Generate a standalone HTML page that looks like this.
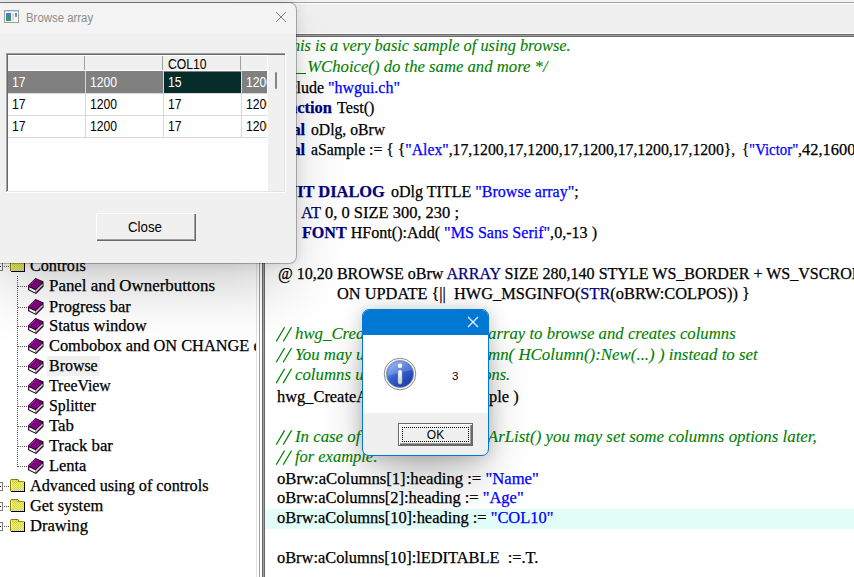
<!DOCTYPE html>
<html><head><meta charset="utf-8">
<style>
*{margin:0;padding:0;box-sizing:border-box}
html,body{width:854px;height:577px;overflow:hidden;background:#f0f0f0}
body{position:relative;font-family:"Liberation Sans",sans-serif}
.abs{position:absolute}
.hl{position:absolute;left:0;width:854px;height:1px}
.clip{position:absolute;overflow:hidden}
.inner{position:absolute;left:0;top:0;width:854px;height:577px}
.ln{position:absolute;white-space:pre;font-family:"Liberation Serif",serif;font-size:16px;line-height:20px;color:#000;transform-origin:0 0;-webkit-text-stroke:0.25px currentColor}
.c{color:#008000;font-style:italic;-webkit-text-stroke:0.1px currentColor}
.s{color:#0000ff}
.k{color:#000080;font-weight:bold}
.n{color:#000080}
.t{color:transparent!important;-webkit-text-stroke:0!important}
.cell{position:absolute;font-family:"Liberation Sans",sans-serif;font-size:14px;line-height:14px;white-space:pre;color:#000;transform:scaleX(0.87);transform-origin:0 0}
</style></head><body>
<!-- top strip -->
<div class="hl" style="top:0;background:#f2f2f2"></div>
<div class="hl" style="top:1px;background:#f8f8f8"></div>
<div class="hl" style="top:2px;background:#a0a0a0"></div>
<div class="hl" style="top:3px;background:#fff"></div>
<div class="hl" style="top:33px;background:#fff"></div>
<div class="hl" style="top:34px;background:#696969"></div>
<div class="hl" style="top:35px;background:#a0a0a0"></div>
<div class="hl" style="top:36px;background:#696969"></div>

<!-- tree -->
<div class="clip" style="left:0;top:37px;width:256px;height:540px;background:#fff">
 <div class="inner" style="top:-37px">
  <div class="abs" style="left:47px;top:356px;width:53px;height:20px;background:#f0f0f0"></div>
<svg class="abs" style="left:0;top:0" width="256" height="577"><defs><pattern id="dith" x="0" y="0" width="2" height="2" patternUnits="userSpaceOnUse"><rect width="2" height="2" fill="#ffff00"/><rect x="1" y="0" width="1" height="1" fill="#c8c8b0"/><rect x="0" y="1" width="1" height="1" fill="#c8c8b0"/></pattern></defs><g transform="translate(10,259)"><path d="M0 2 L1 0 H8 L9.5 2 H14 V12 H0 Z" fill="#808000"/><rect x="1" y="2.8" width="13" height="9.2" fill="url(#dith)"/><rect x="1.2" y="1" width="6.6" height="1.8" fill="url(#dith)"/><rect x="1" y="1.8" width="1" height="8" fill="#f6f6c0"/><rect x="14" y="2.8" width="1" height="10.2" fill="#000"/><rect x="1" y="12" width="14" height="1" fill="#000"/></g><line x1="4" y1="266.5" x2="10" y2="266.5" stroke="#555" stroke-width="1" stroke-dasharray="1 1"/><rect x="-5.5" y="262.5" width="8" height="8" fill="#fff" stroke="#808080"/><line x1="-4" y1="266.5" x2="1" y2="266.5" stroke="#000"/><g transform="translate(28,278)"><polygon points="0,7.5 7.5,0 15.5,3.5 15.5,8.5 8,16 0,12" fill="#000"/><polygon points="0.6,7.4 7.5,0.6 14.6,4 14.3,4.8 7.4,11.2 1.2,8.3" fill="#800080"/><polygon points="1.1,9.2 7.5,12.3 7.5,14.7 1.1,11.5" fill="#fff"/><polygon points="7.5,12.3 14.6,5.4 14.6,7.5 7.5,14.7" fill="#d4d4d4"/><polygon points="7.8,14.8 14.9,7.9 15,8.7 8,15.5" fill="#800080"/><polygon points="0.4,7.6 1.2,7.9 1.2,11.4 0.4,11.1" fill="#800080"/><line x1="1.6" y1="7.2" x2="7.2" y2="1.6" stroke="#c8a0c8" stroke-width="0.8" stroke-dasharray="0.7 0.7"/></g><line x1="18" y1="286.5" x2="28" y2="286.5" stroke="#555" stroke-width="1" stroke-dasharray="1 1"/><g transform="translate(28,299)"><polygon points="0,7.5 7.5,0 15.5,3.5 15.5,8.5 8,16 0,12" fill="#000"/><polygon points="0.6,7.4 7.5,0.6 14.6,4 14.3,4.8 7.4,11.2 1.2,8.3" fill="#800080"/><polygon points="1.1,9.2 7.5,12.3 7.5,14.7 1.1,11.5" fill="#fff"/><polygon points="7.5,12.3 14.6,5.4 14.6,7.5 7.5,14.7" fill="#d4d4d4"/><polygon points="7.8,14.8 14.9,7.9 15,8.7 8,15.5" fill="#800080"/><polygon points="0.4,7.6 1.2,7.9 1.2,11.4 0.4,11.1" fill="#800080"/><line x1="1.6" y1="7.2" x2="7.2" y2="1.6" stroke="#c8a0c8" stroke-width="0.8" stroke-dasharray="0.7 0.7"/></g><line x1="18" y1="307.5" x2="28" y2="307.5" stroke="#555" stroke-width="1" stroke-dasharray="1 1"/><g transform="translate(28,318)"><polygon points="0,7.5 7.5,0 15.5,3.5 15.5,8.5 8,16 0,12" fill="#000"/><polygon points="0.6,7.4 7.5,0.6 14.6,4 14.3,4.8 7.4,11.2 1.2,8.3" fill="#800080"/><polygon points="1.1,9.2 7.5,12.3 7.5,14.7 1.1,11.5" fill="#fff"/><polygon points="7.5,12.3 14.6,5.4 14.6,7.5 7.5,14.7" fill="#d4d4d4"/><polygon points="7.8,14.8 14.9,7.9 15,8.7 8,15.5" fill="#800080"/><polygon points="0.4,7.6 1.2,7.9 1.2,11.4 0.4,11.1" fill="#800080"/><line x1="1.6" y1="7.2" x2="7.2" y2="1.6" stroke="#c8a0c8" stroke-width="0.8" stroke-dasharray="0.7 0.7"/></g><line x1="18" y1="326.5" x2="28" y2="326.5" stroke="#555" stroke-width="1" stroke-dasharray="1 1"/><g transform="translate(28,338)"><polygon points="0,7.5 7.5,0 15.5,3.5 15.5,8.5 8,16 0,12" fill="#000"/><polygon points="0.6,7.4 7.5,0.6 14.6,4 14.3,4.8 7.4,11.2 1.2,8.3" fill="#800080"/><polygon points="1.1,9.2 7.5,12.3 7.5,14.7 1.1,11.5" fill="#fff"/><polygon points="7.5,12.3 14.6,5.4 14.6,7.5 7.5,14.7" fill="#d4d4d4"/><polygon points="7.8,14.8 14.9,7.9 15,8.7 8,15.5" fill="#800080"/><polygon points="0.4,7.6 1.2,7.9 1.2,11.4 0.4,11.1" fill="#800080"/><line x1="1.6" y1="7.2" x2="7.2" y2="1.6" stroke="#c8a0c8" stroke-width="0.8" stroke-dasharray="0.7 0.7"/></g><line x1="18" y1="346.5" x2="28" y2="346.5" stroke="#555" stroke-width="1" stroke-dasharray="1 1"/><g transform="translate(28,358)"><polygon points="0,7.5 7.5,0 15.5,3.5 15.5,8.5 8,16 0,12" fill="#000"/><polygon points="0.6,7.4 7.5,0.6 14.6,4 14.3,4.8 7.4,11.2 1.2,8.3" fill="#800080"/><polygon points="1.1,9.2 7.5,12.3 7.5,14.7 1.1,11.5" fill="#fff"/><polygon points="7.5,12.3 14.6,5.4 14.6,7.5 7.5,14.7" fill="#d4d4d4"/><polygon points="7.8,14.8 14.9,7.9 15,8.7 8,15.5" fill="#800080"/><polygon points="0.4,7.6 1.2,7.9 1.2,11.4 0.4,11.1" fill="#800080"/><line x1="1.6" y1="7.2" x2="7.2" y2="1.6" stroke="#c8a0c8" stroke-width="0.8" stroke-dasharray="0.7 0.7"/></g><line x1="18" y1="366.5" x2="28" y2="366.5" stroke="#555" stroke-width="1" stroke-dasharray="1 1"/><g transform="translate(28,378)"><polygon points="0,7.5 7.5,0 15.5,3.5 15.5,8.5 8,16 0,12" fill="#000"/><polygon points="0.6,7.4 7.5,0.6 14.6,4 14.3,4.8 7.4,11.2 1.2,8.3" fill="#800080"/><polygon points="1.1,9.2 7.5,12.3 7.5,14.7 1.1,11.5" fill="#fff"/><polygon points="7.5,12.3 14.6,5.4 14.6,7.5 7.5,14.7" fill="#d4d4d4"/><polygon points="7.8,14.8 14.9,7.9 15,8.7 8,15.5" fill="#800080"/><polygon points="0.4,7.6 1.2,7.9 1.2,11.4 0.4,11.1" fill="#800080"/><line x1="1.6" y1="7.2" x2="7.2" y2="1.6" stroke="#c8a0c8" stroke-width="0.8" stroke-dasharray="0.7 0.7"/></g><line x1="18" y1="386.5" x2="28" y2="386.5" stroke="#555" stroke-width="1" stroke-dasharray="1 1"/><g transform="translate(28,398)"><polygon points="0,7.5 7.5,0 15.5,3.5 15.5,8.5 8,16 0,12" fill="#000"/><polygon points="0.6,7.4 7.5,0.6 14.6,4 14.3,4.8 7.4,11.2 1.2,8.3" fill="#800080"/><polygon points="1.1,9.2 7.5,12.3 7.5,14.7 1.1,11.5" fill="#fff"/><polygon points="7.5,12.3 14.6,5.4 14.6,7.5 7.5,14.7" fill="#d4d4d4"/><polygon points="7.8,14.8 14.9,7.9 15,8.7 8,15.5" fill="#800080"/><polygon points="0.4,7.6 1.2,7.9 1.2,11.4 0.4,11.1" fill="#800080"/><line x1="1.6" y1="7.2" x2="7.2" y2="1.6" stroke="#c8a0c8" stroke-width="0.8" stroke-dasharray="0.7 0.7"/></g><line x1="18" y1="406.5" x2="28" y2="406.5" stroke="#555" stroke-width="1" stroke-dasharray="1 1"/><g transform="translate(28,418)"><polygon points="0,7.5 7.5,0 15.5,3.5 15.5,8.5 8,16 0,12" fill="#000"/><polygon points="0.6,7.4 7.5,0.6 14.6,4 14.3,4.8 7.4,11.2 1.2,8.3" fill="#800080"/><polygon points="1.1,9.2 7.5,12.3 7.5,14.7 1.1,11.5" fill="#fff"/><polygon points="7.5,12.3 14.6,5.4 14.6,7.5 7.5,14.7" fill="#d4d4d4"/><polygon points="7.8,14.8 14.9,7.9 15,8.7 8,15.5" fill="#800080"/><polygon points="0.4,7.6 1.2,7.9 1.2,11.4 0.4,11.1" fill="#800080"/><line x1="1.6" y1="7.2" x2="7.2" y2="1.6" stroke="#c8a0c8" stroke-width="0.8" stroke-dasharray="0.7 0.7"/></g><line x1="18" y1="426.5" x2="28" y2="426.5" stroke="#555" stroke-width="1" stroke-dasharray="1 1"/><g transform="translate(28,438)"><polygon points="0,7.5 7.5,0 15.5,3.5 15.5,8.5 8,16 0,12" fill="#000"/><polygon points="0.6,7.4 7.5,0.6 14.6,4 14.3,4.8 7.4,11.2 1.2,8.3" fill="#800080"/><polygon points="1.1,9.2 7.5,12.3 7.5,14.7 1.1,11.5" fill="#fff"/><polygon points="7.5,12.3 14.6,5.4 14.6,7.5 7.5,14.7" fill="#d4d4d4"/><polygon points="7.8,14.8 14.9,7.9 15,8.7 8,15.5" fill="#800080"/><polygon points="0.4,7.6 1.2,7.9 1.2,11.4 0.4,11.1" fill="#800080"/><line x1="1.6" y1="7.2" x2="7.2" y2="1.6" stroke="#c8a0c8" stroke-width="0.8" stroke-dasharray="0.7 0.7"/></g><line x1="18" y1="446.5" x2="28" y2="446.5" stroke="#555" stroke-width="1" stroke-dasharray="1 1"/><g transform="translate(28,458)"><polygon points="0,7.5 7.5,0 15.5,3.5 15.5,8.5 8,16 0,12" fill="#000"/><polygon points="0.6,7.4 7.5,0.6 14.6,4 14.3,4.8 7.4,11.2 1.2,8.3" fill="#800080"/><polygon points="1.1,9.2 7.5,12.3 7.5,14.7 1.1,11.5" fill="#fff"/><polygon points="7.5,12.3 14.6,5.4 14.6,7.5 7.5,14.7" fill="#d4d4d4"/><polygon points="7.8,14.8 14.9,7.9 15,8.7 8,15.5" fill="#800080"/><polygon points="0.4,7.6 1.2,7.9 1.2,11.4 0.4,11.1" fill="#800080"/><line x1="1.6" y1="7.2" x2="7.2" y2="1.6" stroke="#c8a0c8" stroke-width="0.8" stroke-dasharray="0.7 0.7"/></g><line x1="18" y1="466.5" x2="28" y2="466.5" stroke="#555" stroke-width="1" stroke-dasharray="1 1"/><g transform="translate(10,479)"><path d="M0 2 L1 0 H8 L9.5 2 H14 V12 H0 Z" fill="#808000"/><rect x="1" y="2.8" width="13" height="9.2" fill="url(#dith)"/><rect x="1.2" y="1" width="6.6" height="1.8" fill="url(#dith)"/><rect x="1" y="1.8" width="1" height="8" fill="#f6f6c0"/><rect x="14" y="2.8" width="1" height="10.2" fill="#000"/><rect x="1" y="12" width="14" height="1" fill="#000"/></g><line x1="4" y1="486.5" x2="10" y2="486.5" stroke="#555" stroke-width="1" stroke-dasharray="1 1"/><rect x="-5.5" y="482.5" width="8" height="8" fill="#fff" stroke="#808080"/><line x1="-4" y1="486.5" x2="1" y2="486.5" stroke="#000"/><g transform="translate(10,499)"><path d="M0 2 L1 0 H8 L9.5 2 H14 V12 H0 Z" fill="#808000"/><rect x="1" y="2.8" width="13" height="9.2" fill="url(#dith)"/><rect x="1.2" y="1" width="6.6" height="1.8" fill="url(#dith)"/><rect x="1" y="1.8" width="1" height="8" fill="#f6f6c0"/><rect x="14" y="2.8" width="1" height="10.2" fill="#000"/><rect x="1" y="12" width="14" height="1" fill="#000"/></g><line x1="4" y1="506.5" x2="10" y2="506.5" stroke="#555" stroke-width="1" stroke-dasharray="1 1"/><rect x="-5.5" y="502.5" width="8" height="8" fill="#fff" stroke="#808080"/><line x1="-4" y1="506.5" x2="1" y2="506.5" stroke="#000"/><g transform="translate(10,519)"><path d="M0 2 L1 0 H8 L9.5 2 H14 V12 H0 Z" fill="#808000"/><rect x="1" y="2.8" width="13" height="9.2" fill="url(#dith)"/><rect x="1.2" y="1" width="6.6" height="1.8" fill="url(#dith)"/><rect x="1" y="1.8" width="1" height="8" fill="#f6f6c0"/><rect x="14" y="2.8" width="1" height="10.2" fill="#000"/><rect x="1" y="12" width="14" height="1" fill="#000"/></g><line x1="4" y1="526.5" x2="10" y2="526.5" stroke="#555" stroke-width="1" stroke-dasharray="1 1"/><rect x="-5.5" y="522.5" width="8" height="8" fill="#fff" stroke="#808080"/><line x1="-4" y1="526.5" x2="1" y2="526.5" stroke="#000"/><line x1="17.5" y1="276" x2="17.5" y2="467" stroke="#555" stroke-width="1" stroke-dasharray="1 1"/></svg>
<div class="ln" style="left:29.5px;top:256.3px;transform:scaleX(1.0104)">Controls</div>
<div class="ln" style="left:48.5px;top:275.7px;transform:scaleX(1.0552)">Panel and Ownerbuttons</div>
<div class="ln" style="left:48.5px;top:296.6px;transform:scaleX(1.0283)">Progress bar</div>
<div class="ln" style="left:48.5px;top:316.1px;transform:scaleX(1.0320)">Status window</div>
<div class="ln" style="left:48.5px;top:336.3px;transform:scaleX(1.0223)">Combobox and ON CHANGE event</div>
<div class="ln" style="left:48.5px;top:355.9px;transform:scaleX(0.9961)">Browse</div>
<div class="ln" style="left:48.5px;top:376.0px;transform:scaleX(0.9898)">TreeView</div>
<div class="ln" style="left:48.5px;top:396.3px;transform:scaleX(0.9913)">Splitter</div>
<div class="ln" style="left:48.5px;top:416.2px;transform:scaleX(1.0477)">Tab</div>
<div class="ln" style="left:48.5px;top:436.1px;transform:scaleX(1.0446)">Track bar</div>
<div class="ln" style="left:48.5px;top:456.4px;transform:scaleX(1.0269)">Lenta</div>
<div class="ln" style="left:29.5px;top:476.1px;transform:scaleX(1.0119)">Advanced using of controls</div>
<div class="ln" style="left:29.5px;top:496.1px;transform:scaleX(1.0217)">Get system</div>
<div class="ln" style="left:29.5px;top:515.9px;transform:scaleX(1.0342)">Drawing</div>
 </div>
</div>
<div class="abs" style="left:256px;top:37px;width:9px;height:540px;background:#fff"></div>
<div class="abs" style="left:256px;top:37px;width:1px;height:540px;background:#e3e3e3"></div>
<div class="abs" style="left:259px;top:37px;width:1px;height:540px;background:#a0a0a0"></div>
<div class="abs" style="left:262px;top:37px;width:1px;height:540px;background:#696969"></div>
<div class="abs" style="left:263px;top:37px;width:1px;height:540px;background:#a0a0a0"></div>
<div class="abs" style="left:264px;top:37px;width:1px;height:540px;background:#696969"></div>

<!-- editor -->
<div class="clip" style="left:265px;top:37px;width:589px;height:540px;background:#fff">
 <div class="inner" style="left:-265px;top:-37px">
  <div class="abs" style="left:265px;top:509px;width:589px;height:20px;background:#e2fcf8"></div>
<div class="ln" style="left:266.2px;top:36.4px;transform:scaleX(1.0221)"><span class="c">/* This is a very basic sample of using browse.</span></div>
<div class="ln" style="left:271.3px;top:56.9px;transform:scaleX(1.0431)"><span class="c t">hwg_</span><span class="c">WChoice() do the same and more */</span></div>
<div class="ln" style="left:268.5px;top:78.0px;transform:scaleX(0.9976)">#include <span class="s">&quot;hwgui.ch&quot;</span></div>
<div class="ln" style="left:268.7px;top:98.1px;transform:scaleX(1.0250)"><span class="k">Function</span></div>
<div class="ln" style="left:337.1px;top:98.1px;transform:scaleX(1.0083)">Test()</div>
<div class="ln" style="left:266.4px;top:119.5px;transform:scaleX(1.0250)"><span class="k">Local</span></div>
<div class="ln" style="left:310.5px;top:119.5px;transform:scaleX(0.9793)">oDlg, oBrw</div>
<div class="ln" style="left:266.4px;top:140.4px;transform:scaleX(1.0250)"><span class="k">Local</span></div>
<div class="ln" style="left:310.8px;top:140.4px;transform:scaleX(0.9827)">aSample := { {<span class="s">&quot;Alex&quot;</span>,17,1200,17,1200,17,1200,17,1200,17,1200},</div>
<div class="ln" style="left:741.9px;top:140.4px;transform:scaleX(0.9263)">{<span class="s">&quot;Victor&quot;</span></div>
<div class="ln" style="left:798.1px;top:140.4px;transform:scaleX(1.0250)">,42,1600,17,1200,17,1200}</div>
<div class="ln" style="left:279.0px;top:181.8px;transform:scaleX(1.0250)"><span class="k">INIT DIALOG</span></div>
<div class="ln" style="left:390.9px;top:181.8px;transform:scaleX(1.0016)">oDlg TITLE <span class="s">&quot;Browse array&quot;</span>;</div>
<div class="ln" style="left:300.5px;top:202.7px;transform:scaleX(1.0294)"><span class="n">AT</span> 0, 0 SIZE 300, 230 ;</div>
<div class="ln" style="left:301.5px;top:222.7px;transform:scaleX(1.0051)"><span class="k">FONT</span> HFont():Add( <span class="s">&quot;MS Sans Serif&quot;</span>,0,-13 )</div>
<div class="ln" style="left:277.5px;top:263.8px;transform:scaleX(1.0026)">@ 10,20 BROWSE oBrw <span class="n">ARRAY</span> SIZE 280,140 STYLE WS_BORDER + WS_VSCROLL</div>
<div class="ln" style="left:336.5px;top:283.6px;transform:scaleX(1.0221)">ON UPDATE {||  HWG_MSGINFO(<span class="n">STR</span>(oBRW:COLPOS)) }</div>
<svg class="abs" style="left:0;top:0" width="300" height="577"><path d="M276.2 341.5L284.6 327.2M283.2 341.5L291.6 327.2" stroke="#008000" stroke-width="1.25" fill="none"/></svg>
<div class="clip" style="left:0;top:0;width:362px;height:577px"><div class="inner"><div class="ln" style="left:295.3px;top:323.8px;transform:scaleX(1.0500)"><span class="c">hwg_CreateArList creates array to browse</span></div></div></div>
<div class="ln" style="left:390.0px;top:323.8px;transform:scaleX(1.0470)"><span class="c">ArList creates array to browse and creates columns</span></div>
<svg class="abs" style="left:0;top:0" width="300" height="577"><path d="M276.2 362.3L284.6 348.0M283.2 362.3L291.6 348.0" stroke="#008000" stroke-width="1.25" fill="none"/></svg>
<div class="clip" style="left:0;top:0;width:362px;height:577px"><div class="inner"><div class="ln" style="left:295.3px;top:344.6px;transform:scaleX(1.0500)"><span class="c">You may use oBrw:AddColumn( HColumn</span></div></div></div>
<div class="ln" style="left:428.0px;top:344.6px;transform:scaleX(1.0540)"><span class="c">AddColumn( HColumn():New(...) ) instead to set</span></div>
<svg class="abs" style="left:0;top:0" width="300" height="577"><path d="M276.2 383.1L284.6 368.8M283.2 383.1L291.6 368.8" stroke="#008000" stroke-width="1.25" fill="none"/></svg>
<div class="clip" style="left:0;top:0;width:362px;height:577px"><div class="inner"><div class="ln" style="left:295.3px;top:365.4px;transform:scaleX(1.0500)"><span class="c">columns using other options.</span></div></div></div>
<div class="ln" style="left:419.4px;top:365.4px;transform:scaleX(1.0250)"><span class="c">other options.</span></div>
<div class="clip" style="left:0;top:0;width:362px;height:577px"><div class="inner"><div class="ln" style="left:276.5px;top:386.7px;transform:scaleX(1.0250)">hwg_CreateArList( oBrw, aSample )</div></div></div>
<div class="ln" style="left:408.8px;top:386.7px;transform:scaleX(1.0250)">oBrw, aSample )</div>
<svg class="abs" style="left:0;top:0" width="300" height="577"><path d="M276.2 444.7L284.6 430.4M283.2 444.7L291.6 430.4" stroke="#008000" stroke-width="1.25" fill="none"/></svg>
<div class="clip" style="left:0;top:0;width:362px;height:577px"><div class="inner"><div class="ln" style="left:294.6px;top:427.0px;transform:scaleX(1.0500)"><span class="c">In case of hwg_CreateArList() you may</span></div></div></div>
<div class="ln" style="left:406.2px;top:427.0px;transform:scaleX(1.0542)"><span class="c">hwg_CreateArList() you may set some columns options later,</span></div>
<svg class="abs" style="left:0;top:0" width="300" height="577"><path d="M276.2 464.8L284.6 450.5M283.2 464.8L291.6 450.5" stroke="#008000" stroke-width="1.25" fill="none"/></svg>
<div class="ln" style="left:295.3px;top:447.1px;transform:scaleX(1.0281)"><span class="c">for example:</span></div>
<div class="ln" style="left:276.5px;top:468.7px;transform:scaleX(1.0415)">oBrw:aColumns[1]:heading := <span class="s">&quot;Name&quot;</span></div>
<div class="ln" style="left:276.5px;top:488.4px;transform:scaleX(1.0282)">oBrw:aColumns[2]:heading := <span class="s">&quot;Age&quot;</span></div>
<div class="ln" style="left:276.5px;top:508.2px;transform:scaleX(1.0269)">oBrw:aColumns[10]:heading := <span class="s">&quot;COL10&quot;</span></div>
<div class="ln" style="left:276.5px;top:548.2px;transform:scaleX(1.0234)">oBrw:aColumns[10]:lEDITABLE  :=.T.</div>
<div class="abs" style="left:296px;top:73px;width:10px;height:1.2px;background:#008000"></div>
 </div>
</div>

<!-- browse dialog -->
<div class="abs" id="dlg" style="left:-8px;top:3px;width:304px;height:260px;background:#f0f0f0;border-radius:7px;box-shadow:0 0 0 1px rgba(0,0,0,0.26),0 0 14px rgba(0,0,0,0.13),0 30px 60px -10px rgba(0,0,0,0.22)">
 <div class="abs" style="left:0;top:0;width:304px;height:30px;background:#f3f3f3;border-radius:8px 8px 0 0"></div>
</div>
<div class="abs" style="left:0;top:3px;width:296px;height:260px">
 <!-- icon -->
 <svg class="abs" style="left:4px;top:7px" width="16" height="14">
  <defs><linearGradient id="bg1" x1="0" y1="0" x2="0" y2="1"><stop offset="0" stop-color="#4a78d8"/><stop offset="1" stop-color="#30a050"/></linearGradient>
  <linearGradient id="bg2" x1="0" y1="0" x2="0" y2="1"><stop offset="0" stop-color="#4a88e0"/><stop offset="1" stop-color="#60c060"/></linearGradient></defs>
  <rect x="0.5" y="0.5" width="14" height="12" fill="#f8f8f8" stroke="#a0a0a0"/>
  <rect x="1" y="1" width="13" height="1" fill="#d8d8e8"/>
  <rect x="2" y="3" width="5" height="8" fill="url(#bg1)"/>
  <rect x="8" y="3" width="2" height="8" fill="#dcdcdc"/>
  <rect x="11" y="3" width="2" height="4" fill="url(#bg2)"/>
 </svg>
 <div class="abs" style="left:25.5px;top:8px;font-size:12px;line-height:14px;color:#8c8c8c;white-space:pre;transform:scaleX(0.95);transform-origin:0 0">Browse array</div>
 <svg class="abs" style="left:275px;top:8px" width="12" height="12">
  <path d="M1 1L11 11M11 1L1 11" stroke="#808080" stroke-width="1"/>
 </svg>
 <!-- browse control -->
 <div class="abs" style="left:6px;top:50px;width:280px;height:140px;background:#fff">
  <div class="abs" style="left:0;top:0;width:280px;height:1px;background:#a0a0a0"></div>
  <div class="abs" style="left:0;top:1px;width:279px;height:1px;background:#696969"></div>
  <div class="abs" style="left:0;top:0;width:1px;height:139px;background:#a0a0a0"></div>
  <div class="abs" style="left:1px;top:1px;width:1px;height:137px;background:#696969"></div>
  <div class="abs" style="left:278px;top:2px;width:1px;height:137px;background:#e3e3e3"></div>
  <div class="abs" style="left:2px;top:138px;width:277px;height:1px;background:#e3e3e3"></div>
  <div class="abs" style="left:279px;top:0;width:1px;height:140px;background:#fff"></div>
  <div class="abs" style="left:0;top:139px;width:280px;height:1px;background:#fff"></div>
  <!-- scrollbar -->
  <div class="abs" style="left:262px;top:2px;width:16px;height:136px;background:#f0f0f0"></div>
  <div class="abs" style="left:268.5px;top:19px;width:2.5px;height:17px;background:#858585;border-radius:1px"></div>
  <!-- header -->
  <div class="abs" style="left:2px;top:2px;width:259px;height:1px;background:#fff"></div>
  <div class="abs" style="left:2px;top:3px;width:259px;height:15px;background:#f0f0f0"></div>
  <div class="abs" style="left:261px;top:2px;width:1px;height:136px;background:#fff"></div>
  <div class="abs" style="left:78px;top:3px;width:1px;height:15px;background:#a0a0a0"></div>
  <div class="abs" style="left:156px;top:3px;width:1px;height:15px;background:#a0a0a0"></div>
  <div class="abs" style="left:234px;top:3px;width:1px;height:15px;background:#a0a0a0"></div>
  <div class="abs" style="left:2px;top:17px;width:259px;height:1px;background:#fff"></div>
  <!-- rows -->
  <div class="abs" style="left:2px;top:18px;width:259px;height:22px;background:#808080"></div>
  <div class="abs" style="left:158px;top:19px;width:77px;height:21px;background:#062d2a"></div>
  <div class="abs" style="left:2px;top:40px;width:259px;height:1px;background:#d8d8d8"></div>
  <div class="abs" style="left:2px;top:62px;width:259px;height:1px;background:#d8d8d8"></div>
  <div class="abs" style="left:2px;top:84px;width:259px;height:1px;background:#d8d8d8"></div>
  <div class="abs" style="left:79px;top:18px;width:1px;height:67px;background:#d8d8d8"></div>
  <div class="abs" style="left:157px;top:18px;width:1px;height:67px;background:#d8d8d8"></div>
  <div class="abs" style="left:235px;top:18px;width:1px;height:67px;background:#d8d8d8"></div>
  <div class="abs" style="left:236px;top:18px;width:25px;height:22px;background:#808080"></div>
 </div>
 <div class="clip" style="left:8px;top:52px;width:259px;height:136px">
  <div class="inner" style="left:-8px;top:-55px">
   <div class="cell" style="left:168px;top:57px">COL10</div>
   <div class="cell" style="left:12px;top:75px;color:#fff">17</div>
   <div class="cell" style="left:90px;top:75px;color:#fff">1200</div>
   <div class="cell" style="left:168px;top:75px;color:#fff">15</div>
   <div class="cell" style="left:246px;top:75px;color:#fff">1200</div>
   <div class="cell" style="left:12px;top:97px">17</div>
   <div class="cell" style="left:90px;top:97px">1200</div>
   <div class="cell" style="left:168px;top:97px">17</div>
   <div class="cell" style="left:246px;top:97px">1200</div>
   <div class="cell" style="left:12px;top:119px">17</div>
   <div class="cell" style="left:90px;top:119px">1200</div>
   <div class="cell" style="left:168px;top:119px">17</div>
   <div class="cell" style="left:246px;top:119px">1200</div>
  </div>
 </div>
 <!-- close button -->
 <div class="abs" style="left:96px;top:210px;width:100px;height:28px;background:#f0f0f0;box-shadow:inset 1px 1px 0 #fff,inset -1px -1px 0 #696969,inset -2px -2px 0 #a0a0a0"></div>
 <div class="abs" style="left:128px;top:216px;font-size:14px;line-height:16px;color:#000;white-space:pre;transform:scaleX(0.95);transform-origin:0 0">Close</div>
</div>

<!-- message box -->
<div class="abs" style="left:362px;top:309px;width:127px;height:147px;background:#f0f0f0;border:1px solid #0078d4;border-radius:7px;overflow:hidden;box-shadow:0 0 18px rgba(0,0,0,0.2),0 26px 50px -8px rgba(0,0,0,0.28)">
 <div class="abs" style="left:0;top:0;width:125px;height:25px;background:#0078d4"></div>
 <div class="abs" style="left:0;top:25px;width:125px;height:78px;background:#fff"></div>
 <svg class="abs" style="left:104px;top:6px" width="12" height="12">
  <path d="M1 1L11 11M11 1L1 11" stroke="#fff" stroke-width="1.1"/>
 </svg>
 <svg class="abs" style="left:20px;top:47px" width="34" height="34" viewBox="0 0 34 34">
  <defs>
   <linearGradient id="ig" x1="0.2" y1="0.1" x2="0.8" y2="0.95">
    <stop offset="0" stop-color="#7aa6f0"/>
    <stop offset="0.45" stop-color="#3461d0"/>
    <stop offset="1" stop-color="#1a3aa6"/>
   </linearGradient>
   <linearGradient id="is" x1="0" y1="0" x2="0" y2="1">
    <stop offset="0" stop-color="#ffffff"/>
    <stop offset="1" stop-color="#c8c8c8"/>
   </linearGradient>
  </defs>
  <circle cx="17" cy="17" r="15.8" fill="#f6f6f6" stroke="#808080" stroke-width="0.9"/>
  <circle cx="17" cy="17" r="13.6" fill="url(#ig)" stroke="#8a8a9a" stroke-width="0.7"/>
  <path d="M4.5 19 A13 13 0 0 1 29.5 13 Q17 15 4.5 19Z" fill="#ffffff" opacity="0.18"/>
  <circle cx="17" cy="8.8" r="2.3" fill="#fff"/>
  <rect x="15" y="13" width="4" height="14.2" rx="2" fill="url(#is)" stroke="#b0b0b0" stroke-width="0.4"/>
 </svg>
 <div class="abs" style="left:89px;top:59px;font-size:11.5px;line-height:14px;color:#000">3</div>
 <!-- ok button -->
 <div class="abs" style="left:35px;top:113px;width:75px;height:23px;background:#f0f0f0;border:1px solid #696969;box-shadow:inset 1px 1px 0 #fff,inset -1px -1px 0 #696969,inset -2px -2px 0 #a0a0a0"></div>
 <div class="abs" style="left:39px;top:117px;width:67px;height:15px;border:1px dotted #000"></div>
 <div class="abs" style="left:35px;top:118px;width:75px;text-align:center;font-size:12px;line-height:14px;color:#000">OK</div>
</div>
</body></html>
